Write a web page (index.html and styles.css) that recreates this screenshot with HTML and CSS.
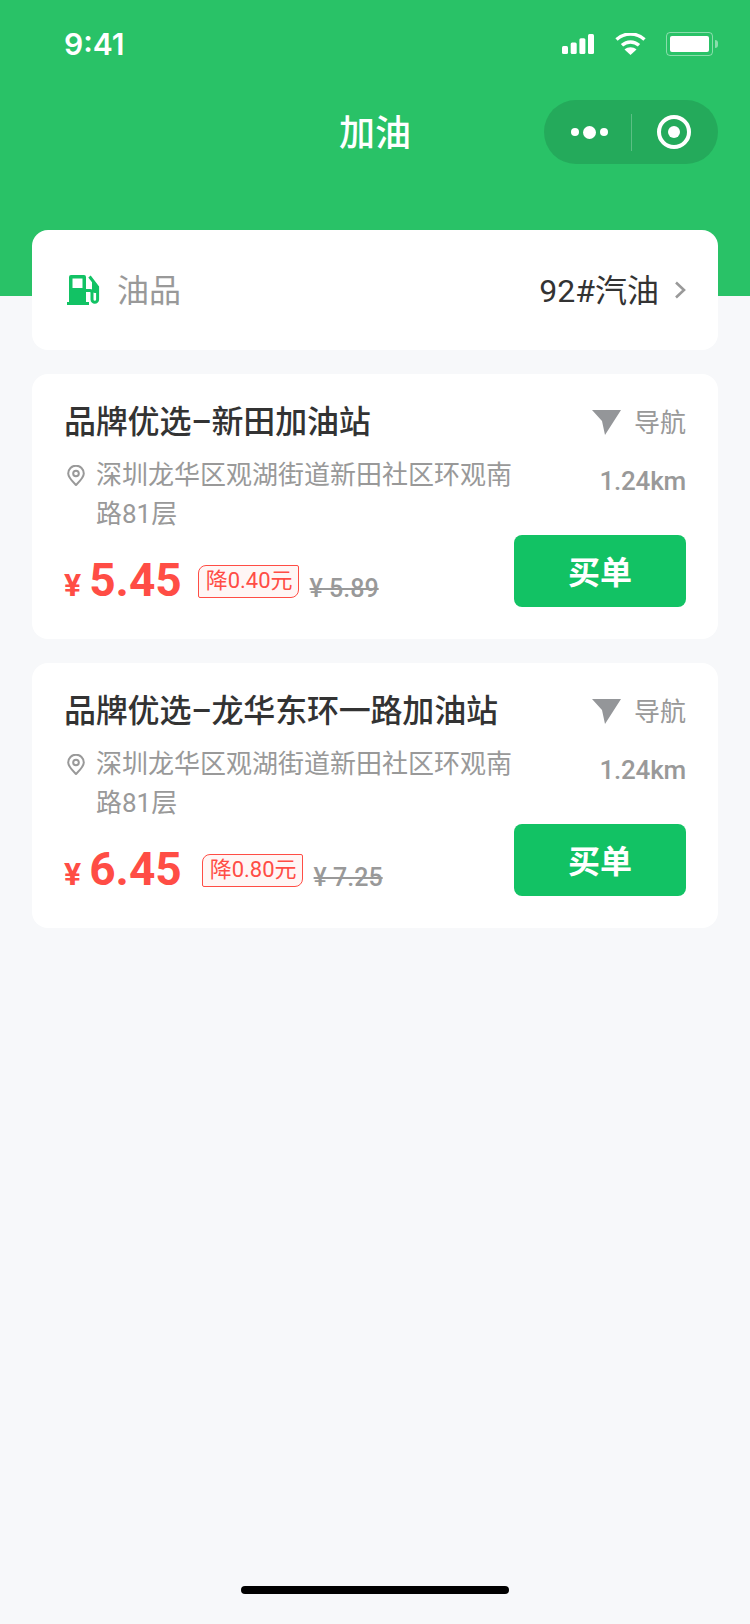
FILE: index.html
```html
<!DOCTYPE html>
<html lang="zh-CN">
<head>
    <meta charset="UTF-8">
    <meta name="viewport" content="width=device-width, initial-scale=1.0">
    <title>加油</title>
    <link rel="stylesheet" href="styles.css">
</head>
<body>
    <div class="page">
        <header class="header">
            <div class="status-bar">
                <span class="time">9:41</span>
                <div class="status-icons">
                    <svg class="icon-signal" width="32" height="20" viewBox="0 0 32 20">
                        <rect x="0" y="12" width="6" height="8" rx="1.5" fill="#fff"/>
                        <rect x="8.700" y="8.500" width="6" height="11.500" rx="1.5" fill="#fff"/>
                        <rect x="17.400" y="4.300" width="6" height="15.700" rx="1.5" fill="#fff"/>
                        <rect x="26" y="0" width="6" height="20" rx="1.5" fill="#fff"/>
                    </svg>
                    <svg class="icon-wifi" width="31" height="22" viewBox="0 0 31 22">
                        <path d="M1.500 6.500C9.500-.8 21.500-.8 29.500 6.500" fill="none" stroke="#fff" stroke-width="3.400"/>
                        <path d="M7 12.300c5-4.500 12-4.500 17 0" fill="none" stroke="#fff" stroke-width="3.400"/>
                        <path d="M15.500 22l-6-5.600c3.500-2.800 8.500-2.800 12 0z" fill="#fff"/>
                    </svg>
                    <div class="battery"><div class="battery-fill"></div></div>
                    <div class="battery-nub"></div>
                </div>
            </div>
            <div class="nav-bar">
                <h1 class="nav-title">加油</h1>
                <div class="capsule">
                    <div class="capsule-dots">
                        <span class="dot"></span>
                        <span class="dot dot-big"></span>
                        <span class="dot"></span>
                    </div>
                    <div class="capsule-line"></div>
                    <div class="capsule-ring"><span class="ring-core"></span></div>
                </div>
            </div>
        </header>

        <main class="content">
            <div class="card oil-row">
                <svg class="icon-fuel" width="33" height="30" viewBox="0 0 33 30">
                    <path fill="#12c264" fill-rule="evenodd" d="M2 2a2 2 0 0 1 2-2h13a2 2 0 0 1 2 2v25h3v3H0v-3h2zM5.500 3.500V13h10V3.500z"/>
                    <path fill="none" stroke="#12c264" stroke-width="3" d="M19 15.500h4a2 2 0 0 1 2 2v7a2.800 2.800 0 0 0 5.600 0V12L22.500 1.500"/>
                    <path fill="#12c264" d="M25 6l7 6v6h-4a3 3 0 0 1-3-3z"/>
                </svg>
                <span class="oil-label">油品</span>
                <span class="oil-value">92#汽油</span>
                <svg class="icon-chevron" width="12" height="18" viewBox="0 0 12 18">
                    <path d="M2 1.500L10 9l-8 7.500" fill="none" stroke="#999" stroke-width="2.600"/>
                </svg>
            </div>

            <div class="card station">
                <div class="station-main">
                    <div class="station-name">品牌优选–新田加油站</div>
                    <div class="address">
                        <svg class="icon-pin" width="18" height="21" viewBox="0 0 18 21">
                            <path d="M9 20C5 16 1.200 12.500 1.200 8.500a7.800 7.800 0 0 1 15.600 0C16.800 12.500 13 16 9 20z" fill="none" stroke="#999" stroke-width="2"/>
                            <circle cx="9" cy="8.500" r="2.800" fill="none" stroke="#999" stroke-width="2"/>
                        </svg>
                        <span class="address-text">深圳龙华区观湖街道新田社区环观南路81层</span>
                    </div>
                    <div class="price-row">
                        <span class="yen">¥</span>
                        <span class="price">5.45</span>
                        <span class="cut">降0.40元</span>
                        <span class="old-price">¥ 5.89</span>
                    </div>
                </div>
                <div class="station-side">
                    <div class="nav-link">
                        <svg class="icon-nav" width="29" height="25" viewBox="0 0 29 25">
                            <path d="M0 0h29L13 25l-3-14z" fill="#949699"/>
                        </svg>
                        <span class="nav-text">导航</span>
                    </div>
                    <div class="distance">1.24km</div>
                    <div class="pay-btn">买单</div>
                </div>
            </div>

            <div class="card station">
                <div class="station-main">
                    <div class="station-name">品牌优选–龙华东环一路加油站</div>
                    <div class="address">
                        <svg class="icon-pin" width="18" height="21" viewBox="0 0 18 21">
                            <path d="M9 20C5 16 1.200 12.500 1.200 8.500a7.800 7.800 0 0 1 15.600 0C16.800 12.500 13 16 9 20z" fill="none" stroke="#999" stroke-width="2"/>
                            <circle cx="9" cy="8.500" r="2.800" fill="none" stroke="#999" stroke-width="2"/>
                        </svg>
                        <span class="address-text">深圳龙华区观湖街道新田社区环观南路81层</span>
                    </div>
                    <div class="price-row">
                        <span class="yen">¥</span>
                        <span class="price">6.45</span>
                        <span class="cut cut-wide">降0.80元</span>
                        <span class="old-price">¥ 7.25</span>
                    </div>
                </div>
                <div class="station-side">
                    <div class="nav-link">
                        <svg class="icon-nav" width="29" height="25" viewBox="0 0 29 25">
                            <path d="M0 0h29L13 25l-3-14z" fill="#949699"/>
                        </svg>
                        <span class="nav-text">导航</span>
                    </div>
                    <div class="distance">1.24km</div>
                    <div class="pay-btn">买单</div>
                </div>
            </div>
        </main>

        <div class="home-bar"></div>
    </div>
</body>
</html>
```

FILE: styles.css
```css
* {
    box-sizing: border-box;
}
body {
    margin: 0;
    background-color: #f7f8fa;
    font-family: Roboto, "Noto Sans CJK SC", sans-serif;
    color: #333;
}
.page {
    display: flex;
    flex-direction: column;
    height: 1624px;
    overflow: hidden;
}

/* Green header */
.header {
    height: 296px;
    flex-shrink: 0;
    background-color: #29c267;
}
.status-bar {
    display: flex;
    justify-content: space-between;
    align-items: center;
    height: 88px;
    padding: 0 32px 0 64px;
}
.time {
    color: #fff;
    font-family: Inter, sans-serif;
    font-size: 30px;
    font-weight: 600;
}
.status-icons {
    display: flex;
    align-items: center;
}
.icon-signal {
    margin-right: 21px;
}
.icon-wifi {
    margin-right: 20px;
}
.battery {
    width: 47px;
    height: 24px;
    padding: 3px;
    border: 1px solid rgba(255, 255, 255, 0.45);
    border-radius: 4px;
}
.battery-fill {
    height: 100%;
    background-color: #fff;
    border-radius: 2px;
}
.battery-nub {
    width: 3px;
    height: 8px;
    margin-left: 2px;
    background-color: rgba(255, 255, 255, 0.45);
    border-radius: 0 3px 3px 0;
}
.nav-bar {
    display: flex;
    justify-content: flex-end;
    position: relative;
    padding: 12px 32px 0 0;
}
.nav-title {
    position: absolute;
    left: 0;
    right: 0;
    top: 22px;
    margin: 0;
    color: #fff;
    font-size: 36px;
    font-weight: 500;
    line-height: 48px;
    text-align: center;
}
.capsule {
    display: flex;
    align-items: center;
    width: 174px;
    height: 64px;
    background-color: #24aa5b;
    border-radius: 32px;
}
.capsule-dots {
    display: flex;
    align-items: center;
    justify-content: center;
    gap: 4px;
    width: 87px;
    padding-left: 3px;
}
.dot {
    width: 8px;
    height: 8px;
    background-color: #fff;
    border-radius: 50%;
}
.dot-big {
    width: 13px;
    height: 13px;
}
.capsule-line {
    width: 1px;
    height: 37px;
    background-color: rgba(255, 255, 255, 0.25);
}
.capsule-ring {
    display: flex;
    align-items: center;
    justify-content: center;
    width: 34px;
    height: 34px;
    margin-left: 25px;
    border: 4px solid #fff;
    border-radius: 50%;
}
.ring-core {
    width: 12px;
    height: 12px;
    background-color: #fff;
    border-radius: 50%;
}

/* Cards */
.content {
    display: flex;
    flex-direction: column;
    gap: 24px;
    margin-top: -66px;
    padding: 0 32px;
}
.card {
    background: #fff;
    border-radius: 16px;
}
.oil-row {
    display: flex;
    align-items: center;
    height: 120px;
    padding: 0 32px 0 35px;
}
.oil-label {
    margin: 0 0 4px 17px;
    color: #999;
    font-size: 32px;
}
.oil-value {
    margin: 0 0 4px auto;
    font-size: 32px;
}
.icon-chevron {
    margin-left: 15px;
}
.station {
    display: flex;
    height: 265px;
    padding: 24px 32px 32px;
}
.station-main {
    display: flex;
    flex-direction: column;
    width: 450px;
}
.station-name {
    font-size: 32px;
    font-weight: 500;
    line-height: 48px;
    letter-spacing: -0.2px;
    white-space: nowrap;
}
.address {
    display: flex;
    margin-top: 10px;
    color: #999;
    font-size: 26px;
    line-height: 39px;
}
.icon-pin {
    flex-shrink: 0;
    margin: 9px 11px 0 3px;
}
.address-text {
    width: 418px;
}
.price-row {
    display: flex;
    align-items: flex-end;
    margin-top: auto;
    padding-bottom: 3px;
}
.yen {
    color: #ff4d45;
    font-size: 32px;
    font-weight: 700;
    line-height: 34px;
    margin-bottom: 2px;
}
.price {
    margin: 0 0 -1px 8px;
    color: #ff4d45;
    font-size: 46px;
    font-weight: 700;
    line-height: 50px;
}
.cut {
    height: 33px;
    margin: 0 0 6px 16px;
    padding: 0 5px 0 7px;
    color: #ff4d45;
    background-color: #fff6f5;
    border: 1px solid #ff4d45;
    border-radius: 8px 2px 8px 2px;
    font-size: 22px;
    line-height: 30px;
}
.cut-wide {
    margin-left: 20px;
}
.old-price {
    margin: 0 0 -2px 11px;
    color: #999;
    font-size: 25px;
    font-weight: 500;
    line-height: 34px;
    text-decoration: line-through;
}
.station-side {
    display: flex;
    flex-direction: column;
    align-items: flex-end;
    flex: 1;
}
.nav-link {
    display: flex;
    align-items: center;
    gap: 13px;
    height: 48px;
    color: #999;
    font-size: 26px;
}
.nav-text {
    margin-bottom: 4px;
}
.distance {
    margin-top: 15px;
    color: #999;
    font-size: 26px;
    font-weight: 500;
    line-height: 40px;
    letter-spacing: -0.2px;
}
.pay-btn {
    width: 172px;
    height: 72px;
    margin-top: auto;
    color: #fff;
    background-color: #12c264;
    border-radius: 8px;
    font-size: 32px;
    font-weight: 700;
    line-height: 76px;
    text-align: center;
}

.home-bar {
    width: 268px;
    height: 8px;
    margin: auto auto 30px;
    background-color: #000;
    border-radius: 4px;
}
```
